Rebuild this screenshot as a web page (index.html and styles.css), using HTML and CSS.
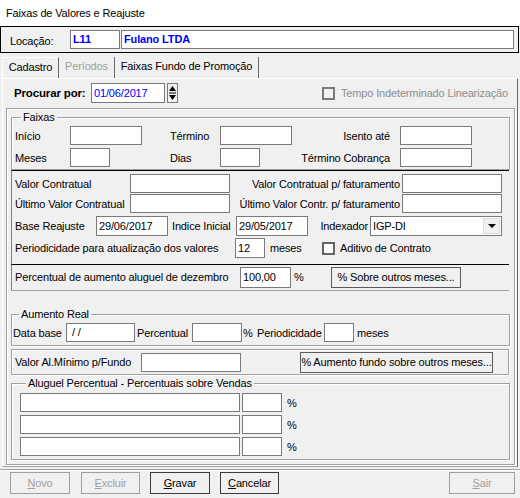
FILE: index.html
```html
<!DOCTYPE html>
<html lang="pt">
<head>
<meta charset="utf-8">
<title>Faixas de Valores e Reajuste</title>
<link rel="stylesheet" href="styles.css">
</head>
<body>
<div class="title">Faixas de Valores e Reajuste</div>

<div class="loc">
  <span class="loc-lbl">Locação:</span>
  <div class="inp code">L11</div>
  <div class="inp name">Fulano LTDA</div>
</div>

<div class="tabs">
  <div class="tab tab1 active">Cadastro</div>
  <div class="tab tab2 disabled">Períodos</div>
  <div class="tab tab3">Faixas Fundo de Promoção</div>
</div>

<div class="tabpanel">
  <div class="search-row">
    <span class="search-lbl">Procurar por:</span>
    <div class="inp date">01/06/2017</div>
    <svg class="spin" width="11" height="20" viewBox="0 0 11 20">
      <rect x="0.5" y="0.5" width="10" height="19" fill="#f0f0f0" stroke="#7a7a7a"/>
      <polygon points="2,8 5.5,3 9,8" fill="#000"/>
      <rect x="2" y="9.5" width="7" height="1" fill="#000"/>
      <polygon points="2,12 9,12 5.5,17" fill="#000"/>
    </svg>
    <label class="chk chk-dis"><span class="box"></span>Tempo Indeterminado Linearização</label>
  </div>

  <div class="outer">
    <fieldset class="grp faixas">
      <legend>Faixas</legend>
      <div class="fgrid">
        <span>Início</span><div class="inp w72"></div><span></span>
        <span>Término</span><div class="inp w72"></div>
        <span class="r">Isento até</span><div class="inp w72"></div>
        <span>Meses</span><div class="inp w40"></div><span></span>
        <span>Dias</span><div class="inp w40"></div>
        <span class="r">Término Cobrança</span><div class="inp w72"></div>
      </div>
    </fieldset>

    <div class="sec sec2">
      <div class="row ra">
        <span class="c115">Valor Contratual</span><div class="inp w100"></div>
        <span class="c172 r">Valor Contratual p/ faturamento</span><div class="inp w100"></div>
      </div>
      <div class="row rb">
        <span class="c115">Último Valor Contratual</span><div class="inp w100"></div>
        <span class="c172 r">Último Valor Contr. p/ faturamento</span><div class="inp w100"></div>
      </div>
      <div class="row rc">
        <span class="c81">Base Reajuste</span><div class="inp w72 h20">29/06/2017</div>
        <span class="c68">Indice Inicial</span><div class="inp w72 h20">29/05/2017</div>
        <span class="c62 r">Indexador</span>
        <div class="combo"><span class="combo-txt">IGP-DI</span><span class="drop"><span class="tri"></span></span></div>
      </div>
      <div class="row rd">
        <span class="c220">Periodicidade para atualização dos valores</span><div class="inp w30 h20">12</div>
        <span class="c57">meses</span>
        <label class="chk"><span class="box"></span>Aditivo de Contrato</label>
      </div>
    </div>

    <div class="sec sec3">
      <div class="row re">
        <span class="c225">Percentual de aumento aluguel de dezembro</span><div class="inp w51 h21">100,00</div>
        <span class="c40">%</span>
        <div class="btn btn-sobre">% Sobre outros meses...</div>
      </div>
    </div>

    <fieldset class="grp aumento">
      <legend>Aumento Real</legend>
      <div class="row rf">
        <span class="c53">Data base</span><div class="inp w69">&nbsp;/ /</div>
        <span class="c57 pl2">Percentual</span><div class="inp w50"></div>
        <span class="c15 pl1">%</span>
        <span class="c67">Periodicidade</span><div class="inp w30"></div>
        <span class="pl3">meses</span>
      </div>
    </fieldset>

    <div class="fundo">
      <span class="c126">Valor Al.Mínimo p/Fundo</span><div class="inp w100"></div>
      <div class="btn btn-fundo">% Aumento fundo sobre outros meses...</div>
    </div>

    <fieldset class="grp aluguel">
      <legend>Aluguel Percentual - Percentuais sobre Vendas</legend>
      <div class="prow"><div class="inp w220"></div><div class="inp w40"></div><span class="pl3">%</span></div>
      <div class="prow"><div class="inp w220"></div><div class="inp w40"></div><span class="pl3">%</span></div>
      <div class="prow"><div class="inp w220"></div><div class="inp w40"></div><span class="pl3">%</span></div>
    </fieldset>
  </div>
</div>

<div class="bottombar">
  <div class="btn b-novo dis"><u>N</u>ovo</div>
  <div class="btn b-excluir dis"><u>E</u>xcluir</div>
  <div class="btn b-gravar"><u>G</u>ravar</div>
  <div class="btn b-cancelar"><u>C</u>ancelar</div>
  <div class="btn b-sair dis"><u>S</u>air</div>
</div>
</body>
</html>
```

FILE: styles.css
```css
* { box-sizing: border-box; }
html, body { margin: 0; padding: 0; }
body {
  width: 520px;
  height: 498px;
  overflow: hidden;
  background: #f0f0f0;
  font-family: "Liberation Sans", Arial, sans-serif;
  font-size: 11px;
  letter-spacing: -0.15px;
  color: #000;
}

.title {
  height: 26px;
  background: #fff;
  padding-left: 6px;
  line-height: 26px;
  white-space: nowrap;
}

/* generic input */
.inp {
  background: #fff;
  border: 1px solid #7a7a7a;
  height: 19px;
  padding: 0 2px;
  line-height: 17px;
  white-space: nowrap;
  overflow: hidden;
  flex: none;
}
.h20 { height: 20px; line-height: 18px; }
.h21 { height: 21px; line-height: 19px; }
.w30 { width: 30px; }
.w40 { width: 40px; }
.w50 { width: 50px; }
.w51 { width: 51px; }
.w69 { width: 69px; }
.w72 { width: 72px; }
.w100 { width: 100px; }
.w220 { width: 220px; }

.r { text-align: right; padding-right: 10px; }
.pl1 { padding-left: 1px; }
.pl2 { padding-left: 2px; }
.pl3 { padding-left: 3px; }

/* location bar */
.loc {
  height: 27px;
  margin-right: 1px;
  border: 1px solid #000;
  display: flex;
  align-items: center;
  padding-left: 9px;
}
.loc-lbl { width: 60px; padding-top: 3px; }
.code, .name { color: #0000ff; font-weight: bold; }
.code { width: 50px; margin-right: 1px; }
.name { width: 393px; }

/* tabs */
.tabs {
  display: flex;
  margin: 4px 0 0 2px;
  height: 21px;
}
.tab {
  height: 21px;
  border-right: 1px solid #696969;
  text-align: center;
  padding-top: 3px;
  white-space: nowrap;
}
.tab1 { width: 57px; border-left: 1px solid #fff; border-top: 1px solid #fff; }
.tab2 { width: 56px; }
.tab3 { width: 144px; }
.tab.disabled { color: #a0a0a0; }

.tabpanel {
  margin-left: 2px;
  width: 516px;
  border-top: 1px solid #fff;
  border-left: 1px solid #fff;
  border-right: 1px solid #696969;
  border-bottom: 1px solid #a0a0a0;
}

.search-row {
  display: flex;
  align-items: center;
  height: 20px;
  margin-top: 4px;
  padding-left: 11px;
}
.search-lbl { width: 77px; font-weight: bold; font-size: 11.5px; }
.date { width: 74px; height: 20px; line-height: 18px; color: #0000ff; }
.spin { margin-left: 2px; flex: none; }

.chk { display: flex; align-items: center; white-space: nowrap; }
.chk .box {
  width: 13px;
  height: 13px;
  border: 2px solid #646464;
  background: #fff;
  margin-right: 5px;
  flex: none;
}
.chk-dis { margin-left: 144px; color: #8d8d8d; }
.chk-dis .box { border-color: #7a7a7a; background: #f0f0f0; margin-right: 6px; }

/* outer frame */
.outer {
  margin: 5px 0 1px 3px;
  width: 509px;
  border: 1px solid #a0a0a0;
  box-shadow: inset 1px 1px 0 #fff, 1px 1px 0 #fff;
  padding: 0 4px 4px 4px;
}

fieldset.grp {
  margin: 0;
  min-width: 0;
  border: 1px solid #a0a0a0;
  box-shadow: inset 1px 1px 0 #fff, 1px 1px 0 #fff;
}
fieldset.grp legend {
  padding: 0 2px;
  margin-left: 6px;
  line-height: 14px;
  height: 14px;
  white-space: nowrap;
}

fieldset.faixas { margin-top: 1px; padding: 2px 3px 2px 3px; }
.fgrid {
  display: grid;
  grid-template-columns: 55px 72px 28px 50px 72px 108px 72px;
  grid-auto-rows: 19px;
  row-gap: 3px;
  align-items: center;
}

.row { display: flex; align-items: center; white-space: nowrap; }
.row > span { flex: none; }

.sec { border-left: 1px solid #808080; margin-right: 1px; }
.sec2 {
  border-top: 1px solid #000;
  padding: 3px 0 6px 3px;
}
.ra, .rb { height: 19px; }
.ra { margin-bottom: 1px; }
.rb { margin-bottom: 3px; }
.rc, .rd { height: 20px; }
.rc { margin-bottom: 2px; }

.c15 { width: 15px; }
.c40 { width: 40px; padding-left: 3px; }
.c53 { width: 53px; }
.c57 { width: 57px; padding-left: 5px; }
.c62 { width: 62px; }
.c62.r { padding-right: 2px; }
.c67 { width: 67px; }
.c68 { width: 68px; padding-left: 4px; }
.c81 { width: 81px; }
.c115 { width: 115px; }
.c126 { width: 126px; }
.c172 { width: 172px; }
.c172.r { padding-right: 2px; }
.c220 { width: 220px; }
.c225 { width: 225px; }
.rf .c57 { padding-left: 2px; }

.combo {
  width: 132px;
  height: 20px;
  background: #fff;
  border: 1px solid #7a7a7a;
  display: flex;
  align-items: stretch;
  flex: none;
}
.combo-txt { flex: 1; padding-left: 2px; line-height: 18px; }
.drop {
  width: 17px;
  margin: 1px;
  background: #f0f0f0;
  border: 1px solid #dcdcdc;
  display: flex;
  align-items: center;
  justify-content: center;
}
.tri {
  width: 0;
  height: 0;
  border-left: 4px solid transparent;
  border-right: 4px solid transparent;
  border-top: 4px solid #000;
}

.sec3 {
  border-top: 1px solid #000;
  border-bottom: 1px solid #a0a0a0;
  padding: 1px 0 2px 3px;
}
.re { height: 22px; }

.btn {
  height: 21px;
  border: 1px solid #5a5a5a;
  background: #f0f0f0;
  display: flex;
  align-items: center;
  justify-content: center;
  white-space: nowrap;
  flex: none;
}
.btn-sobre { width: 130px; }

fieldset.aumento { margin-top: 16px; padding: 2px 0 3px 1px; }
.rf { height: 19px; }

.fundo {
  margin: 3px 1px 0 0;
  height: 26px;
  border: 1px solid #a0a0a0;
  box-shadow: inset 1px 1px 0 #fff, 1px 1px 0 #fff;
  display: flex;
  align-items: center;
  padding-left: 3px;
  white-space: nowrap;
}
.btn-fundo { width: 193px; margin-left: 59px; }

fieldset.aluguel { margin-top: 1px; padding: 3px 0 3px 8px; }
.prow {
  display: flex;
  align-items: center;
  height: 19px;
  gap: 2px;
}
.prow + .prow { margin-top: 3px; }

/* bottom bar */
.bottombar {
  margin-top: 2px;
  border-top: 1px solid #a0a0a0;
  box-shadow: inset 0 1px 0 #fff;
  height: 40px;
  display: flex;
  align-items: flex-start;
  padding: 2px 0 0 10px;
}
.bottombar .btn { height: 22px; border-color: #3c3c3c; }
.bottombar .btn.dis { color: #a0a0a0; border-color: #a0a0a0; }
.b-novo { width: 60px; margin-right: 11px; }
.b-excluir { width: 59px; margin-right: 10px; }
.b-gravar { width: 60px; margin-right: 10px; }
.b-cancelar { width: 59px; }
.b-sair { width: 66px; margin-left: auto; margin-right: 5px; }
```
